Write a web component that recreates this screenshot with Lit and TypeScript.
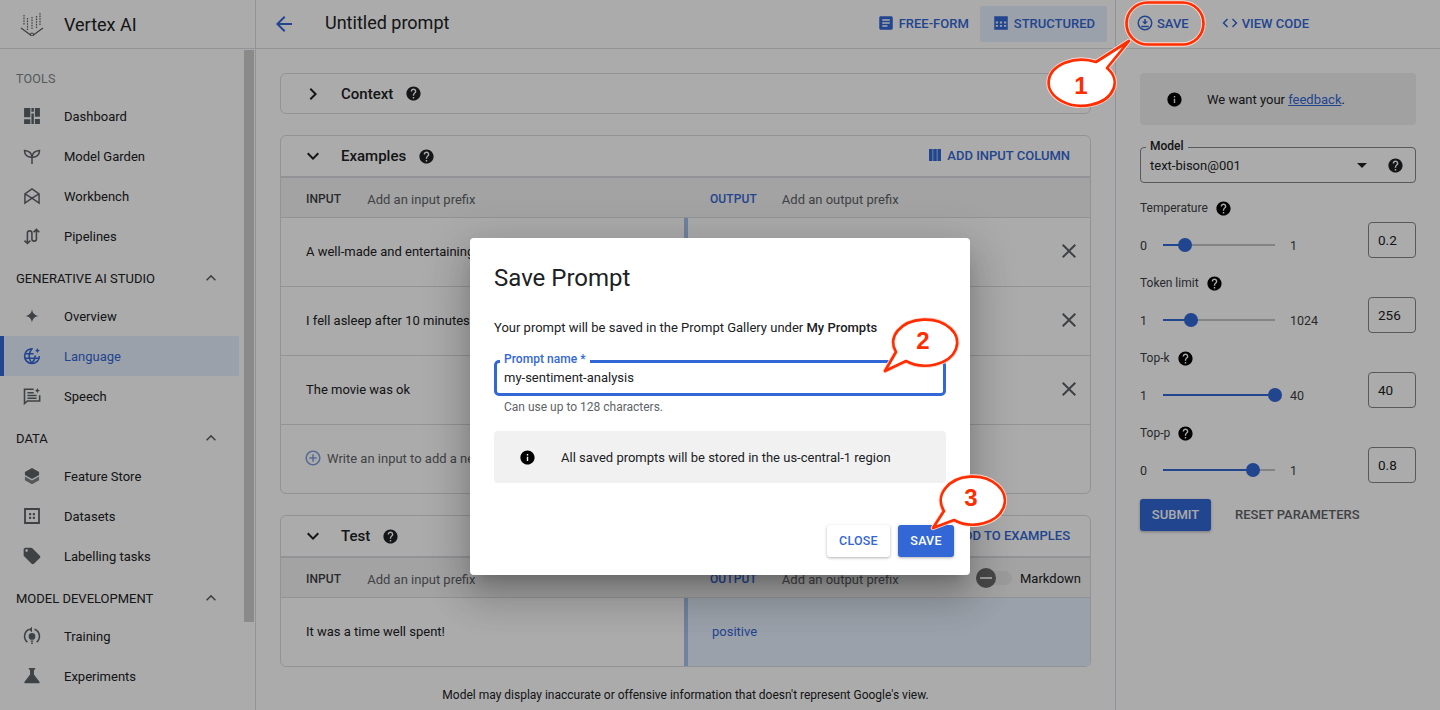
import { LitElement, html, css, svg } from "lit";
import { customElement } from "lit/decorators.js";

const P = {
  help: "M12 2C6.48 2 2 6.48 2 12s4.48 10 10 10 10-4.48 10-10S17.52 2 12 2zm1 17h-2v-2h2v2zm2.07-7.75l-.9.92C13.45 12.9 13 13.5 13 15h-2v-.5c0-1.1.45-2.1 1.17-2.83l1.24-1.26c.37-.36.59-.86.59-1.41 0-1.1-.9-2-2-2s-2 .9-2 2H8c0-2.21 1.79-4 4-4s4 1.79 4 4c0 .88-.36 1.68-.93 2.25z",
  info: "M12 2C6.48 2 2 6.48 2 12s4.48 10 10 10 10-4.48 10-10S17.52 2 12 2zm1 15h-2v-6h2v6zm0-8h-2V7h2v2z",
  back: "M20 11H7.83l5.59-5.59L12 4l-8 8 8 8 1.41-1.41L7.83 13H20v-2z",
  article: "M19 3H5c-1.1 0-2 .9-2 2v14c0 1.1.9 2 2 2h14c1.1 0 2-.9 2-2V5c0-1.1-.9-2-2-2zm-5 14H7v-2h7v2zm3-4H7v-2h10v2zm0-4H7V7h10v2z",
  code: "M9.4 16.6 4.8 12l4.6-4.6L8 6l-6 6 6 6 1.4-1.4zm5.2 0 4.6-4.6-4.6-4.6L16 6l6 6-6 6-1.4-1.4z",
  close: "M19 6.41 17.59 5 12 10.59 6.41 5 5 6.41 10.59 12 5 17.59 6.41 19 12 13.41 17.59 19 19 17.59 13.41 12z",
  less: "M12 8l-6 6 1.41 1.41L12 10.83l4.59 4.58L18 14z",
  more: "M16.59 8.59 12 13.17 7.41 8.59 6 10l6 6 6-6z",
  right: "M10 6 8.59 7.41 13.17 12l-4.58 4.59L10 18l6-6z",
  drop: "M7 10l5 5 5-5z",
  add: "M13 7h-2v4H7v2h4v4h2v-4h4v-2h-4V7zm-1-5C6.49 2 2 6.49 2 12s4.49 10 10 10 10-4.49 10-10S17.51 2 12 2zm0 18c-4.41 0-8-3.59-8-8s3.59-8 8-8 8 3.59 8 8-3.59 8-8 8z",
  columns: "M3 3h5.4v18H3zM9.3 3h5.4v18H9.3zM15.6 3H21v18h-5.4z",
  table: "M3 3h18v18H3zM5 10v2.5h3V10zm5.5 0v2.5h3V10zm5.5 0v2.5h3V10zM5 14.5V17h3v-2.5zm5.5 0V17h3v-2.5zm5.5 0V17h3v-2.5z",
  save: "M12 2a10 10 0 1 0 0 20 10 10 0 0 0 0-20zm0 18a8 8 0 1 1 0-16 8 8 0 0 1 0 16zM11 6.5h2V10h3l-4 4-4-4h3zM7 15.5h10v2H7z",
};

const icon = (d: string, size = 24) =>
  html`<svg width=${size} height=${size} viewBox="0 0 24 24" fill="currentColor" fill-rule="evenodd"><path d=${d}></path></svg>`;

const SPARK = "M18.500 2c.4 2.100 1.400 3.100 3.500 3.500-2.100.4-3.100 1.400-3.500 3.500-.4-2.100-1.400-3.100-3.500-3.500 2.100-.4 3.100-1.400 3.500-3.500z";

const NAV: Record<string, any> = {
  dashboard: svg`<path d="M2.500 2.500h7.500v11H2.500zM2.500 16h7.500v5.500H2.500zM11.300 2.500h2.900v4.500h-2.900zM11.300 9h2.900v12.500h-2.900zM15.500 2.500h6v10.500h-6zM15.500 15.500h6v6h-6z" fill="currentColor"/>`,
  garden: svg`<path d="M12 21.500V13M12 13.500c-.3-4-3-7.600-9-8 0 5 3.200 8.300 9 8zM12 13.500c.3-4 3-7.600 9-8 0 5-3.200 8.300-9 8z" fill="none" stroke="currentColor" stroke-width="1.800"/>`,
  workbench: svg`<path d="M3.500 9.500 12 3.500l8.500 6v11L12 14.500l-8.500 6zM3.500 9.500l8.500 5 8.500-5" fill="none" stroke="currentColor" stroke-width="1.800"/>`,
  pipelines: svg`<path d="M6.500 21V8.500a2.700 2.700 0 0 1 5.400 0v7a2.700 2.700 0 0 0 5.400 0V4M3 17.500 6.500 21l3.500-3.500M13.800 7.500 17.300 4l3.500 3.500" fill="none" stroke="currentColor" stroke-width="1.900"/>`,
  overview: svg`<path d="M12 4c.7 4.800 3.200 7.300 8 8-4.800.7-7.300 3.200-8 8-.7-4.800-3.200-7.300-8-8 4.800-.7 7.300-3.200 8-8z" fill="currentColor"/>`,
  language: svg`<path d="M13 3.300A8.900 8.900 0 1 0 20.900 12M3.200 9.300H14M3.200 14.700h17.500M12 3.200c-4.600 5-4.600 12.300 0 17.600M12 20.800c2.600-3 3.800-6 4-9.500" fill="none" stroke="currentColor" stroke-width="1.900"/><path d=${SPARK} fill="currentColor"/>`,
  speech: svg`<path d="M14 3.800H3v17.200l3.500-3h14.700v-7" fill="none" stroke="currentColor" stroke-width="1.900"/><path d="M6.500 8h7.500M6.500 11.300h11M6.500 14.600h11" stroke="currentColor" stroke-width="1.700"/><path d=${SPARK} fill="currentColor"/>`,
  store: svg`<path d="M12 2.500l8.500 4.800v3.400L12 15.500l-8.500-4.800V7.300z" fill="currentColor"/><path d="M3.500 12.700l8.500 4.800 8.500-4.800v4.300L12 21.800 3.500 17z" fill="currentColor" opacity=".8"/>`,
  datasets: svg`<path d="M2.500 2.500h19v19h-19zM4.700 4.700v14.600h14.600V4.700z" fill="currentColor" fill-rule="evenodd"/><path d="M8.500 8.500h2.500V11H8.500zM13 8.500h2.500V11H13zM8.500 13H11v2.500H8.500zM13 13h2.500v2.500H13z" fill="currentColor"/>`,
  labels: svg`<path d="M21.410 11.580l-9-9C12.050 2.220 11.550 2 11 2H4c-1.100 0-2 .9-2 2v7c0 .55.22 1.050.59 1.420l9 9c.36.36.86.58 1.410.58.55 0 1.050-.22 1.410-.59l7-7c.37-.36.59-.86.59-1.410 0-.55-.23-1.060-.59-1.420zM5.500 7C4.670 7 4 6.330 4 5.500S4.670 4 5.500 4 7 4.670 7 5.500 6.330 7 5.500 7z" fill="currentColor" fill-rule="evenodd"/>`,
  training: svg`<path d="M6.500 19.500A9 9 0 0 1 9 4M17.500 19.500a9 9 0 0 0-2.500-15.500" fill="none" stroke="currentColor" stroke-width="1.900"/><path d="M12 1v6.500L8.300 4.200z" fill="currentColor"/><circle cx="12" cy="12.500" r="4" fill="currentColor"/><path d="M10.500 17.300h3v1.500h-3zM11 19.800h2v1.700h-2z" fill="currentColor"/>`,
  experiments: svg`<path d="M19.800 18.400 14 10.670V6.500l1.350-1.690c.26-.33.03-.81-.39-.81H9.040c-.42 0-.65.480-.39.810L10 6.500v4.170L4.200 18.400c-.49.660-.02 1.600.8 1.600h14c.82 0 1.290-.94.800-1.600z" fill="currentColor" transform="translate(-1.800 -2.200) scale(1.150)"/>`,
};

type Item = { label: string; icon: string; active?: boolean };
const SECTIONS: { title: string; muted?: boolean; items: Item[] }[] = [
  { title: "TOOLS", muted: true, items: [
    { label: "Dashboard", icon: "dashboard" },
    { label: "Model Garden", icon: "garden" },
    { label: "Workbench", icon: "workbench" },
    { label: "Pipelines", icon: "pipelines" },
  ]},
  { title: "GENERATIVE AI STUDIO", items: [
    { label: "Overview", icon: "overview" },
    { label: "Language", icon: "language", active: true },
    { label: "Speech", icon: "speech" },
  ]},
  { title: "DATA", items: [
    { label: "Feature Store", icon: "store" },
    { label: "Datasets", icon: "datasets" },
    { label: "Labelling tasks", icon: "labels" },
  ]},
  { title: "MODEL DEVELOPMENT", items: [
    { label: "Training", icon: "training" },
    { label: "Experiments", icon: "experiments" },
  ]},
];

const PARAMS = [
  { label: "Temperature", min: "0", max: "1", value: "0.2", pct: 20 },
  { label: "Token limit", min: "1", max: "1024", value: "256", pct: 25 },
  { label: "Top-k", min: "1", max: "40", value: "40", pct: 100 },
  { label: "Top-p", min: "0", max: "1", value: "0.8", pct: 80 },
];

const EXAMPLES = [
  "A well-made and entertaining film",
  "I fell asleep after 10 minutes",
  "The movie was ok",
];

@customElement("app-root")
export class AppRoot extends LitElement {
  static styles = css`
    :host { display: block; position: relative; width: 1440px; height: 710px; overflow: hidden; background: #fff; color: #202124; font-family: Roboto, "Liberation Sans", sans-serif; font-size: 13px; }
    * { box-sizing: border-box; }
    svg { display: block; flex: none; }
    .page { display: flex; height: 710px; }

    aside { width: 256px; flex: none; border-right: 1px solid #dadce0; display: flex; flex-direction: column; }
    .brand { height: 49px; flex: none; border-bottom: 1px solid #dadce0; display: flex; align-items: center; font-size: 18px; padding-left: 20px; gap: 20px; }
    .brand svg { color: #5f6368; }
    .navwrap { flex: 1; display: flex; min-height: 0; }
    nav { flex: 1; padding-top: 7px; min-width: 0; }
    .thumb { width: 10px; height: 572px; margin: 1px 1px 0 0; background: #cecece; flex: none; }
    .sec { height: 40px; padding: 4px 18px 0 16px; width: 239px; display: flex; align-items: center; justify-content: space-between; font-size: 13px; white-space: nowrap; }
    .sec.muted { color: #80868b; font-size: 12.5px; letter-spacing: .2px; padding-top: 4px; }
    .sec svg { color: #5f6368; }
    .item { height: 40px; width: 239px; display: flex; align-items: center; padding-left: 22px; gap: 22px; color: #202124; }
    .item svg { color: #5f6368; }
    .item.active { background: #e8f0fe; color: #3367d6; border-left: 4px solid #3367d6; padding-left: 18px; }
    .item.active svg { color: #3367d6; }

    main { width: 860px; flex: none; border-right: 1px solid #dadce0; display: flex; flex-direction: column; }
    .top { height: 49px; flex: none; border-bottom: 1px solid #dadce0; display: flex; align-items: center; padding: 0 8px 0 16px; }
    .top .backb { color: #3367d6; }
    .top h1 { font-size: 18px; font-weight: 400; margin: 0 0 3px 0; flex: 1; padding-left: 29px; }
    .tb { display: flex; align-items: center; gap: 4px; height: 36px; padding: 0 12px 2px; color: #3367d6; font-weight: 500; font-size: 13px; border-radius: 2px; white-space: nowrap; }
    .tb.on { background: #e8f0fe; margin-left: -1px; }
    .body { flex: 1; padding: 24px 24px 0; display: flex; flex-direction: column; min-height: 0; }
    .card { border: 1px solid #dadce0; border-radius: 6px; }
    .card + .card { margin-top: 21px; }
    .chead { height: 40px; display: flex; align-items: center; padding: 0 20px; font-size: 15px; font-weight: 500; }
    .chead.short { height: 39px; }
    .chead .name { margin-left: 16px; margin-right: 12px; }
    .chead .spacer { flex: 1; }
    .action { display: flex; align-items: center; gap: 4px; color: #3367d6; font-size: 13px; font-weight: 500; padding-bottom: 2px; }
    .cols { display: grid; grid-template-columns: 403px 1fr; height: 42px; padding-top: 3px; background: #f3f3f3; border-top: 2px solid #dadce0; border-bottom: 1px solid #dadce0; font-size: 13px; color: #5f6368; }
    .colh { display: flex; align-items: center; padding-left: 25px; gap: 26px; position: relative; }
    .colh b { font-size: 12px; font-weight: 500; color: #3c4043; letter-spacing: .1px; }
    .colh.out { padding-left: 26px; gap: 25px; }
    .colh.out b { color: #3367d6; }
    .row { display: grid; grid-template-columns: 403px 1fr; height: 69px; border-bottom: 1px solid #dadce0; }
    .row:last-child { height: 68px; border-bottom: 0; }
    .cell { display: flex; align-items: center; padding: 0 0 2px 25px; white-space: nowrap; overflow: hidden; }
    .cell.out { border-left: 4px solid #a8c2ee; justify-content: space-between; padding: 0 9px 2px 24px; color: #3367d6; }
    .cell.out svg { color: #5f6368; }
    .cell.out.filled { background: #e8f0fe; }
    .newrow { display: flex; align-items: center; padding: 0 0 2px 23px; gap: 5px; height: 68px; color: #5f6368; }
    .newrow svg { color: #7f9fdf; }
    .toggle { position: absolute; right: 9px; top: 0; bottom: 2px; display: flex; align-items: center; gap: 8px; color: #202124; }
    .track { width: 36px; height: 14px; border-radius: 7px; background: #e8e8e8; position: relative; }
    .knob { position: absolute; left: 0; top: -3px; width: 20px; height: 20px; border-radius: 50%; background: #6c6c6c; display: flex; align-items: center; justify-content: center; }
    .knob::after { content: ""; width: 12px; height: 2px; background: #e8e8e8; }
    .foot { text-align: center; font-size: 12px; margin-top: 21px; }

    section.side { flex: 1; display: flex; flex-direction: column; min-width: 0; }
    .rtop { height: 49px; flex: none; border-bottom: 1px solid #dadce0; display: flex; align-items: center; padding-left: 20px; }
    .rtop .tb { padding: 0 9px 2px 0; gap: 3px; }
    .rtop .tb + .tb { margin-left: 23px; }
    .panel { padding: 24px 24px 0; display: flex; flex-direction: column; }
    .infobox { height: 52px; border-radius: 4px; background: #f1f1f1; display: flex; align-items: center; padding-left: 26px; gap: 24px; color: #202124; }
    .infobox svg { color: #000; }
    .infobox a { color: #3367d6; text-decoration: underline; }
    .select { position: relative; margin-top: 22px; height: 36px; border: 1px solid #80868b; border-radius: 4px; display: flex; align-items: center; padding: 0 11px 0 9px; justify-content: space-between; font-size: 13px; }
    .float { position: absolute; left: 5px; top: -9px; background: #fff; padding: 0 4px; font-size: 12px; font-weight: 500; line-height: 15px; }
    .sel-icons { display: flex; align-items: center; gap: 13px; }
    .param { display: grid; grid-template-columns: 1fr 48px; grid-template-rows: 22px 36px; height: 75px; }
    .params { margin-top: 17px; }
    .plabel { grid-column: 1 / 3; display: flex; align-items: flex-start; gap: 7px; font-size: 12px; color: #3c4043; line-height: 15px; padding-top: 1px; }
    .plabel svg { color: #000; margin-top: -1px; }
    .srow { display: grid; grid-template-columns: 23px 112px auto; align-items: center; padding-top: 10px; font-size: 12.5px; color: #3c4043; }
    .srow span:last-child { padding-left: 15px; }
    .slider { height: 2px; background: #c4c4c4; position: relative; }
    .fill { height: 2px; background: #3367d6; }
    .dot { position: absolute; top: -6px; width: 14px; height: 14px; margin-left: -7px; border-radius: 50%; background: #3367d6; }
    .num { border: 1px solid #80868b; border-radius: 4px; padding: 0 0 1px 9px; display: flex; align-items: center; font-size: 13.5px; }
    .btns { display: flex; align-items: center; margin-top: -1px; gap: 24px; }
    .submit { background: #3367d6; color: #fff; height: 32px; width: 71px; padding-bottom: 1px; border-radius: 3px; display: flex; align-items: center; justify-content: center; font-weight: 500; box-shadow: 0 1px 3px rgba(0,0,0,.3); }
    .reset { color: #5f6368; font-weight: 500; padding-bottom: 1px; }

    .overlay { position: absolute; inset: 0; background: rgba(0,0,0,.33); }
    .modal { position: absolute; left: 470px; top: 238px; width: 500px; height: 337px; background: #fff; border-radius: 4px; padding: 24px 24px 0; box-shadow: 0 11px 15px -7px rgba(0,0,0,.2), 0 24px 38px 3px rgba(0,0,0,.14), 0 9px 46px 8px rgba(0,0,0,.12); display: flex; flex-direction: column; }
    .modal h2 { margin: 0; font-size: 24px; font-weight: 400; line-height: 32px; color: #202124; }
    .lead { margin-top: 26px; line-height: 16px; }
    .lead b { font-weight: 500; }
    .field { position: relative; margin-top: 24px; height: 36px; border: 3px solid #3367d6; border-radius: 5px; display: flex; align-items: center; padding: 0 0 1px 7px; font-size: 13px; }
    .field .lab { position: absolute; left: 3px; top: -11px; background: #fff; padding: 0 4px; color: #3367d6; font-size: 12px; font-weight: 500; line-height: 15px; letter-spacing: .05px; }
    .hint { margin: 4px 0 0 10px; font-size: 12px; color: #5f6368; line-height: 14px; }
    .minfo { margin-top: 17px; height: 52px; border-radius: 4px; background: #f1f1f1; display: flex; align-items: center; padding-left: 25px; gap: 25px; }
    .minfo svg { color: #000; }
    .actions { margin: 42px -8px 0 0; display: flex; justify-content: flex-end; gap: 8px; }
    .mbtn { height: 32px; padding-bottom: 2px; border-radius: 3px; display: flex; align-items: center; justify-content: center; font-weight: 500; font-size: 12.5px; letter-spacing: .2px; box-shadow: 0 1px 3px rgba(0,0,0,.3); }
    .mbtn.c { width: 63px; color: #3367d6; background: #fff; }
    .mbtn.s { width: 56px; color: #fff; background: #3367d6; }

    .notes { position: absolute; inset: 0; pointer-events: none; }
    .notes text { font-family: "Liberation Sans", Arial, sans-serif; font-weight: 700; font-size: 24px; fill: #ff2d00; text-anchor: middle; }
  `;

  private helpI(size = 17) { return icon(P.help, size); }

  private sidebar() {
    return html`<aside>
      <div class="brand">
        <svg width="24" height="24" viewBox="0 0 24 24" fill="none" stroke="currentColor" stroke-width="1.200">
          <path d="M1 16l11 8 11-8" stroke-width="1.300"/>
          <circle cx="12" cy="22.500" r="1.500" fill="#fff"/>
          <path d="M4 3v10M7.500 6v12M12 5v13M16.500 4v13M20 1v12" stroke-dasharray="1.600 1"/>
        </svg>
        <span>Vertex AI</span>
      </div>
      <div class="navwrap">
        <nav>${SECTIONS.map(s => html`
          <div class="sec ${s.muted ? "muted" : ""}"><span>${s.title}</span>${s.muted ? "" : icon(P.less, 20)}</div>
          ${s.items.map(i => html`<div class="item ${i.active ? "active" : ""}">
            <svg width="20" height="20" viewBox="0 0 24 24">${NAV[i.icon]}</svg>
            <span>${i.label}</span></div>`)}
        `)}</nav>
        <div class="thumb"></div>
      </div>
    </aside>`;
  }

  private main() {
    return html`<main>
      <div class="top">
        <span class="backb">${icon(P.back, 24)}</span>
        <h1>Untitled prompt</h1>
        <div class="tb">${icon(P.article, 18)}FREE-FORM</div>
        <div class="tb on">${icon(P.table, 18)}STRUCTURED</div>
      </div>
      <div class="body">
        <div class="card">
          <div class="chead short">${icon(P.right, 24)}<span class="name">Context</span>${this.helpI()}</div>
        </div>
        <div class="card">
          <div class="chead">${icon(P.more, 24)}<span class="name">Examples</span>${this.helpI()}<span class="spacer"></span>
            <div class="action">${icon(P.columns, 16)}ADD INPUT COLUMN</div></div>
          <div class="cols">
            <div class="colh"><b>INPUT</b><span>Add an input prefix</span></div>
            <div class="colh out"><b>OUTPUT</b><span>Add an output prefix</span></div>
          </div>
          ${EXAMPLES.map(e => html`<div class="row">
            <div class="cell">${e}</div>
            <div class="cell out"><span></span>${icon(P.close, 24)}</div>
          </div>`)}
          <div class="newrow">${icon(P.add, 18)}<span>Write an input to add a new example</span></div>
        </div>
        <div class="card">
          <div class="chead">${icon(P.more, 24)}<span class="name">Test</span>${this.helpI()}<span class="spacer"></span>
            <div class="action">ADD TO EXAMPLES</div></div>
          <div class="cols">
            <div class="colh"><b>INPUT</b><span>Add an input prefix</span></div>
            <div class="colh out"><b>OUTPUT</b><span>Add an output prefix</span>
              <div class="toggle"><div class="track"><div class="knob"></div></div><span>Markdown</span></div></div>
          </div>
          <div class="row">
            <div class="cell">It was a time well spent!</div>
            <div class="cell out filled">positive</div>
          </div>
        </div>
        <div class="foot">Model may display inaccurate or offensive information that doesn't represent Google's view.</div>
      </div>
    </main>`;
  }

  private side() {
    return html`<section class="side">
      <div class="rtop">
        <div class="tb">${icon(P.save, 18)}SAVE</div>
        <div class="tb">${icon(P.code, 18)}VIEW CODE</div>
      </div>
      <div class="panel">
        <div class="infobox">${icon(P.info, 17)}<span>We want your <a>feedback</a>.</span></div>
        <div class="select"><span class="float">Model</span><span>text-bison@001</span>
          <span class="sel-icons">${icon(P.drop, 24)}${this.helpI()}</span></div>
        <div class="params">
          ${PARAMS.map(p => html`<div class="param">
            <div class="plabel"><span>${p.label}</span>${icon(P.help, 17)}</div>
            <div class="srow"><span>${p.min}</span>
              <div class="slider"><div class="fill" style="width:${p.pct}%"></div><div class="dot" style="left:${p.pct}%"></div></div>
              <span>${p.max}</span></div>
            <div class="num">${p.value}</div>
          </div>`)}
        </div>
        <div class="btns"><div class="submit">SUBMIT</div><div class="reset">RESET PARAMETERS</div></div>
      </div>
    </section>`;
  }

  private modal() {
    return html`<div class="modal">
      <h2>Save Prompt</h2>
      <div class="lead">Your prompt will be saved in the Prompt Gallery under <b>My Prompts</b></div>
      <div class="field"><span class="lab">Prompt name *</span>my-sentiment-analysis</div>
      <div class="hint">Can use up to 128 characters.</div>
      <div class="minfo">${icon(P.info, 17)}<span>All saved prompts will be stored in the us-central-1 region</span></div>
      <div class="actions"><div class="mbtn c">CLOSE</div><div class="mbtn s">SAVE</div></div>
    </div>`;
  }

  private bubble(d: string, tx: number, ty: number, n: string) {
    return svg`<path d=${d} fill="#fff" stroke="#ffd9d0" stroke-width="4.500" stroke-linejoin="round"/>
      <path d=${d} fill="#fff" stroke="#ff2d00" stroke-width="2.700" stroke-linejoin="round"/>
      <text x=${tx} y=${ty}>${n}</text>`;
  }

  private notes() {
    return html`<svg class="notes" width="1440" height="710" viewBox="0 0 1440 710">
      <rect x="1126.500" y="2.500" width="77" height="42" rx="21" fill="none" stroke="#ffd9d0" stroke-width="4.500"/>
      <rect x="1126.500" y="2.500" width="77" height="42" rx="21" fill="none" stroke="#ff2d00" stroke-width="2.700"/>
      ${this.bubble("M1096 62 A33 23 0 1 0 1107 68 L1129 41 Z", 1081, 94, "1")}
      ${this.bubble("M896 352 A32 23 0 1 1 906 361 L885 371 Z", 923, 349, "2")}
      ${this.bubble("M944 511 A32 24 0 1 1 954 520 L933 528 Z", 971, 506, "3")}
    </svg>`;
  }

  render() {
    return html`<div class="page">${this.sidebar()}${this.main()}${this.side()}</div>
      <div class="overlay"></div>
      ${this.modal()}
      ${this.notes()}`;
  }
}
